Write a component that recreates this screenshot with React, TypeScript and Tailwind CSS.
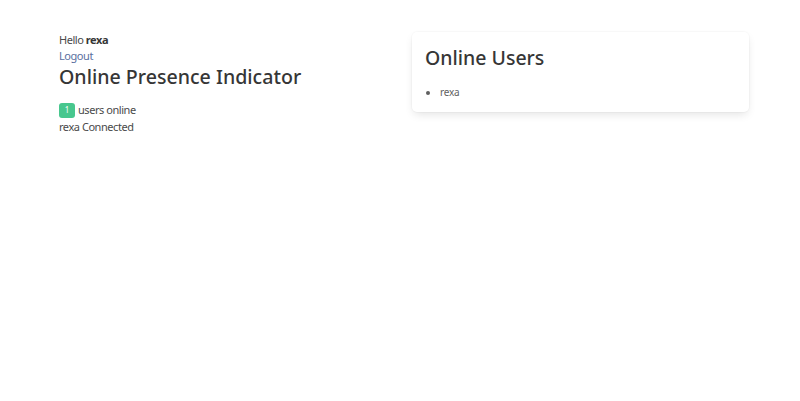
import React from "react";

export default function App() {
  return (
    <div className="min-h-[401px] w-[800px] bg-white text-[#4a4a4a]" style={{ fontFamily: '"Noto Sans", sans-serif' }}>
      <div className="flex gap-[15px] pl-[59px] pt-[32px]">
        <div className="w-[338px] shrink-0 text-[11px] leading-[16px] tracking-[-0.45px]">
          <div>
            Hello <strong className="font-bold text-[#363636]">rexa</strong>
          </div>
          <a className="text-[#5a6fa0]" href="#">Logout</a>
          <h1 className="mt-[1px] text-[19.6px] leading-[24px] font-medium tracking-normal text-[#363636]">Online Presence Indicator</h1>
          <div className="mt-[13px] flex items-center gap-[3px]">
            <span className="inline-flex h-[15px] w-[16px] items-center justify-center rounded-[3px] bg-[#48c78e] text-[8px] tracking-normal text-white">1</span>
            <span>users online</span>
          </div>
          <div className="mt-[1px]">rexa Connected</div>
        </div>
        <div className="h-[80px] w-[337px] shrink-0 rounded-[5px] bg-white px-[13px] pt-[13px] shadow-[0_4px_10px_-2px_rgba(10,10,10,0.12),0_0_0_1px_rgba(10,10,10,0.02)]">
          <h2 className="text-[19.5px] leading-[26px] font-medium text-[#363636]">Online Users</h2>
          <ul className="mt-[14px] list-disc pl-[15px] text-[10px] leading-[14px] tracking-[-0.2px] text-[#5f5f5f]">
            <li>rexa</li>
          </ul>
        </div>
      </div>
    </div>
  );
}
